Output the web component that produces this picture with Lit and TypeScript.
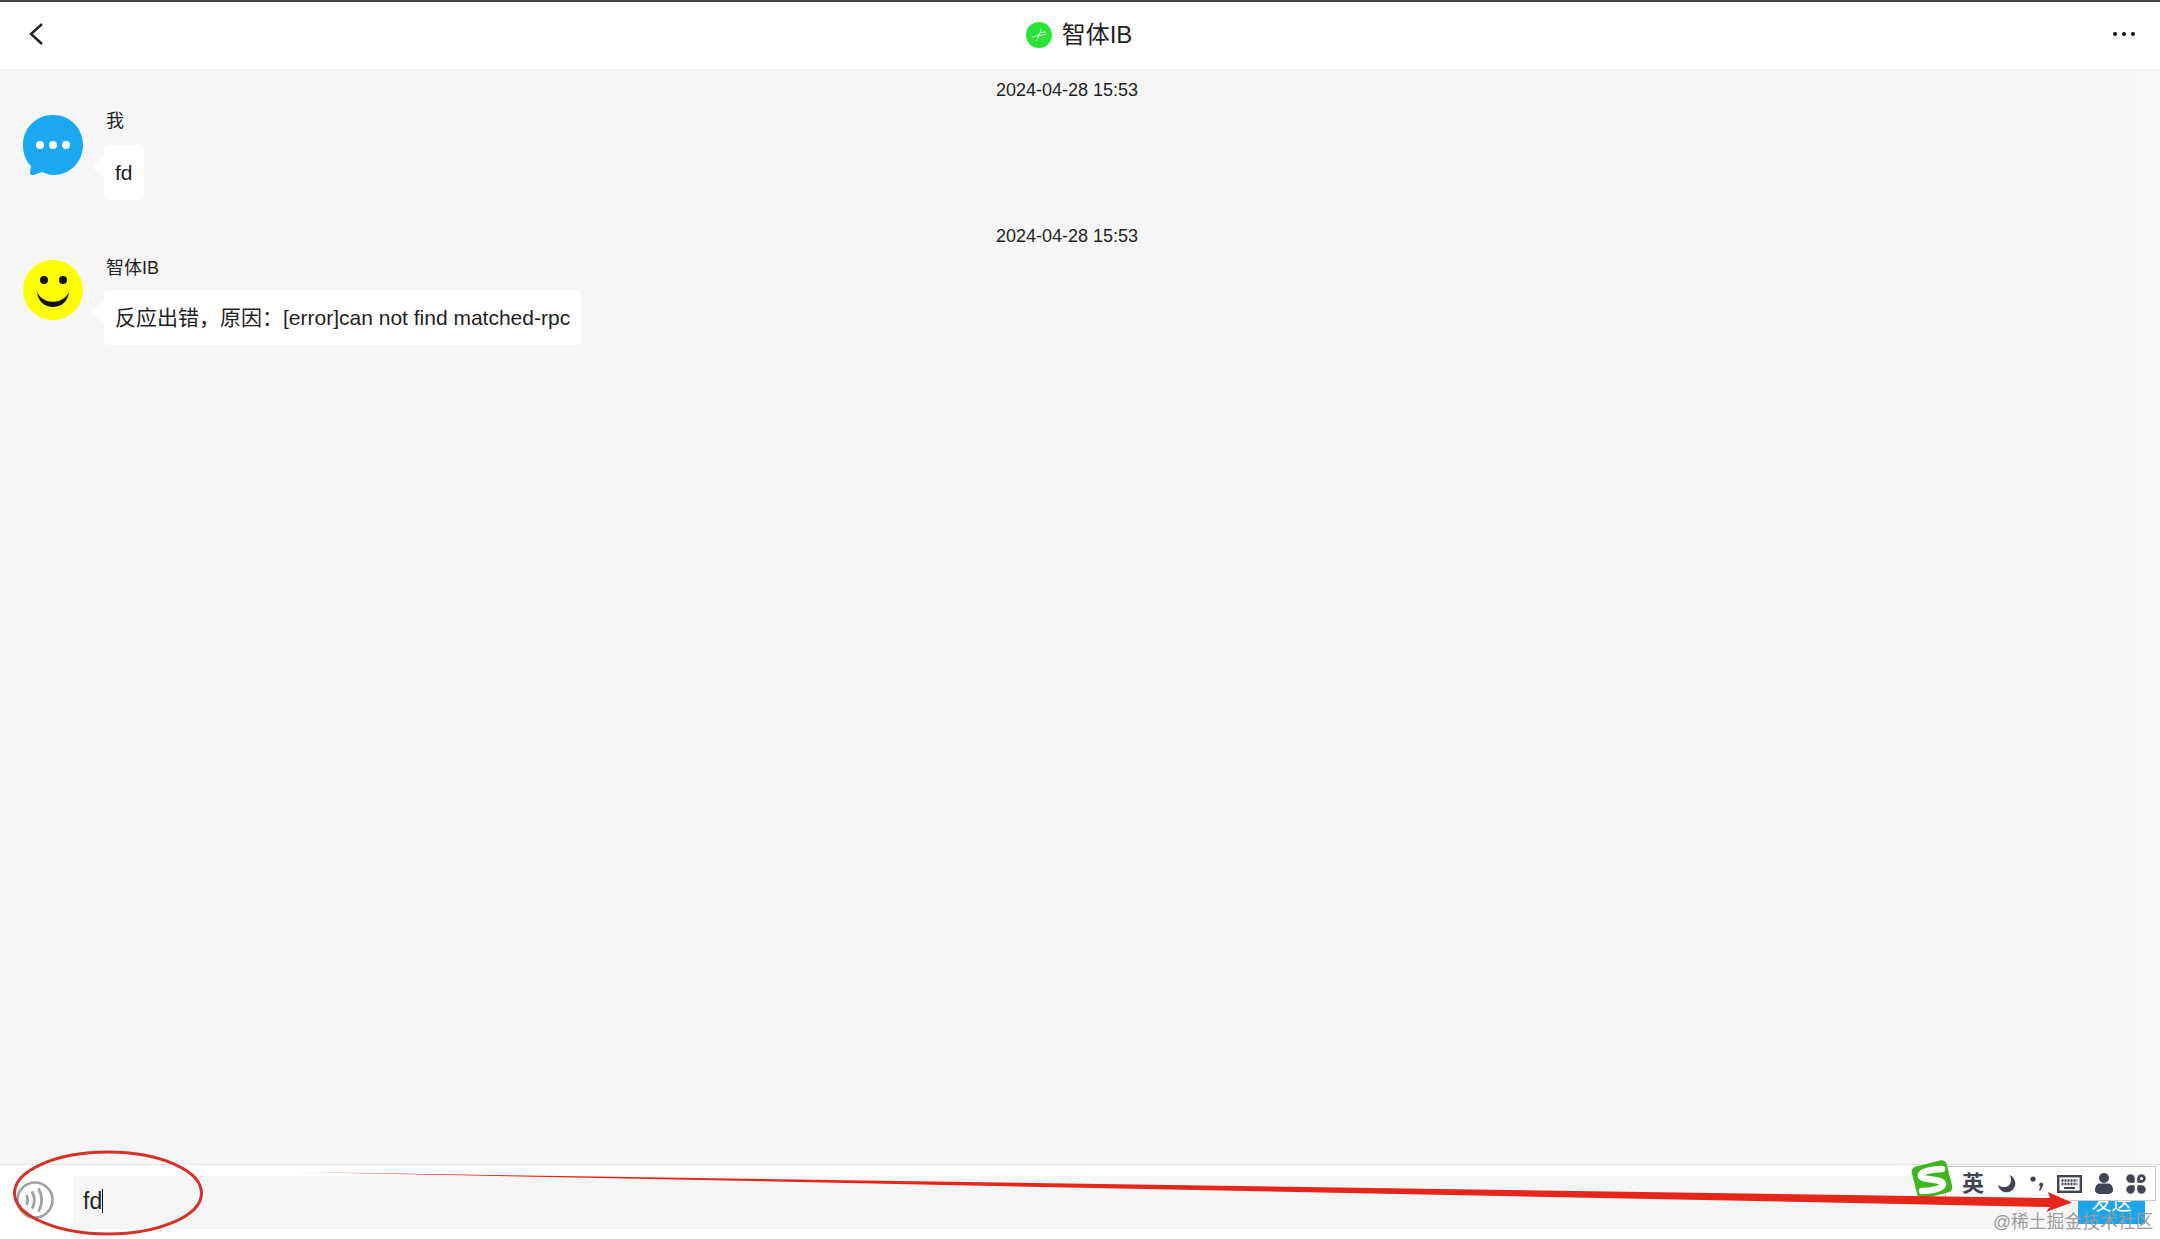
import { LitElement, html, css } from "lit";
import { customElement } from "lit/decorators.js";

const REPLY = "\u53CD\u5E94\u51FA\u9519\uFF0C\u539F\u56E0\uFF1A[error]can not find matched-rpc";

@customElement("app-root")
export class AppRoot extends LitElement {
  static styles = css`
    :host { display: block; height: 1239px; position: relative; overflow: hidden; font-family: "Liberation Sans", "Noto Sans CJK SC", sans-serif; color: #1f1f1f; background: #fff; }
    .page { display: flex; flex-direction: column; height: 100%; border-top: 2px solid #444; box-sizing: border-box; }
    .header { height: 69px; flex: none; box-sizing: border-box; border-bottom: 1px solid #eaeaea; background: #fff; display: flex; align-items: center; justify-content: space-between; padding: 0 24px 4px 28px; }
    .title { display: flex; align-items: center; gap: 10px; font-size: 24px; margin-left: 2px; }
    .title svg { margin-top: 2px; }
    .title span { margin-top: -4px; }
    .body { flex: 1; display: flex; min-height: 0; background: #f6f6f6; }
    .scroll { flex: 1; padding-top: 9px; box-sizing: border-box; }
    .track { width: 26px; flex: none; background: #f7f7f7; }
    .time { text-align: center; font-size: 18px; line-height: 20px; margin-bottom: 14px; }
    .time.first { margin-bottom: 15px; }
    .msg { display: flex; gap: 21px; padding-left: 23px; margin-bottom: 26px; }
    .avatar { width: 60px; height: 60px; flex: none; }
    .who { font-size: 18px; line-height: 20px; margin: -4px 0 14px 2px; }
    .who.low { margin-top: -2px; margin-bottom: 12px; }
    .bubble { position: relative; display: inline-block; background: #fff; border-radius: 5px; font-size: 21px; line-height: 55px; padding: 0 11px; }
    .bubble::before { content: ""; position: absolute; left: -12px; top: 11px; border: 11px solid transparent; border-left: 0; border-right: 12px solid #fff; }
    .footer { height: 75px; flex: none; box-sizing: border-box; border-top: 1px solid #e2e2e2; background: #fff; display: flex; padding: 11px 15px 10px 16px; }
    .voice { width: 38px; height: 38px; flex: none; margin: 5px 20px 0 0; }
    .input { flex: 1; background: #f6f6f6; font-size: 23px; line-height: 50px; padding-left: 9px; }
    .caret { display: inline-block; width: 1px; height: 24px; background: #111; vertical-align: -4px; }
    .send { width: 67px; height: 42px; flex: none; align-self: center; background: #1aa5ec; color: #fff; font-size: 20px; text-align: center; line-height: 42px; }
    .ink { position: absolute; left: 0; top: 0; pointer-events: none; }
    .ime { position: absolute; left: 1945px; top: 1166px; width: 211px; height: 35px; box-sizing: border-box; background: #fff; border: 1px solid #c9c9c9; display: flex; align-items: center; gap: 13px; padding-left: 16px; color: #3f4554; }
    .ime-zh { font-size: 22px; font-weight: 700; line-height: 1; width: 22px; flex: none; }
    .ime svg { flex: none; }
    .logo { position: absolute; left: 1909px; top: 1159px; }
    .mark { position: absolute; left: 1993px; top: 1211px; font-size: 17.8px; line-height: 22px; color: #9b9b9b; white-space: nowrap; }
  `;

  private bubbleIcon() {
    return html`<svg class="avatar" viewBox="0 0 60 60"><path fill="#1aa8f1" d="M30 0C13 0 0 13 0 30c0 9 3 16 8 21l-1 7c0 2 2 2 4 2l8-3c3 1 7 3 11 3 17 0 30-13 30-30S47 0 30 0z"/><circle cx="17" cy="30" r="4" fill="#fff"/><circle cx="30" cy="30" r="4" fill="#fff"/><circle cx="43" cy="30" r="4" fill="#fff"/></svg>`;
  }

  private smile() {
    return html`<svg class="avatar" viewBox="0 0 60 60"><circle cx="30" cy="30" r="30" fill="#ffff00"/><ellipse cx="21" cy="20" rx="4" ry="4" fill="#111"/><ellipse cx="40" cy="20" rx="4" ry="4" fill="#111"/><path d="M14 32c2 20 30 20 32 0-6 13-26 13-32 0z" fill="#111"/></svg>`;
  }

  render() {
    return html`
      <div class="page">
        <div class="header">
          <svg width="16" height="26" viewBox="0 0 16 26"><path d="M14 3 3 13l11 10" fill="none" stroke="#222" stroke-width="2.4"/></svg>
          <div class="title">
            <svg width="26" height="26" viewBox="0 0 26 26"><circle cx="13" cy="13" r="13" fill="#2be338"/><path d="M6 15c4 0 5-2 8-4 2-1 4-1 6-1M15 7c0 5-3 8-5 12M11 14c3 0 6-1 9-2" fill="none" stroke="#d8f5da" stroke-width="1"/></svg>
            <span>智体IB</span>
          </div>
          <svg width="24" height="6" viewBox="0 0 24 6"><circle cx="3" cy="3" r="2" fill="#111"/><circle cx="12" cy="3" r="2" fill="#111"/><circle cx="21" cy="3" r="2" fill="#111"/></svg>
        </div>
        <div class="body">
          <div class="scroll">
            <div class="time first">2024-04-28 15:53</div>
            <div class="msg">
              ${this.bubbleIcon()}
              <div><div class="who">我</div><div class="bubble">fd</div></div>
            </div>
            <div class="time">2024-04-28 15:53</div>
            <div class="msg">
              ${this.smile()}
              <div><div class="who low">智体IB</div><div class="bubble">${REPLY}</div></div>
            </div>
          </div>
          <div class="track"></div>
        </div>
        <div class="footer">
          <svg class="voice" viewBox="0 0 38 38"><circle cx="19" cy="19" r="17.500" fill="none" stroke="#a0a0a0" stroke-width="2.600"/><g fill="none" stroke="#a0a0a0" stroke-width="2.800" stroke-linecap="round"><path d="M11 15c1 3 1 5 0 8"/><path d="M16.500 11.500c2.500 5 2.500 10 0 15"/><path d="M23 8.500c3.500 7 3.500 14 0 21"/></g></svg>
          <div class="input">fd<span class="caret"></span></div>
          <div class="send">发送</div>
        </div>
      </div>

      <div class="mark">@稀土掘金技术社区</div>

      <div class="ime">
        <span class="ime-zh">英</span>
        <svg width="20" height="20" viewBox="0 0 22 22"><path fill="#3f4554" d="M14 1c3 6 1 12-4 13-3 1-6 0-9-2 1 5 6 9 11 8 5-1 9-6 8-11-1-4-3-7-6-8z"/></svg>
        <svg width="14" height="15" viewBox="0 0 14 15"><circle cx="3" cy="3" r="2.600" fill="#3f4554"/><path fill="#3f4554" d="M10 7c2-1 4 0 3 3l-3 5-1-1 1.500-3.500C9 10 8.500 8 10 7z"/></svg>
        <svg width="25" height="18" viewBox="0 0 25 18"><rect x="1.200" y="1.200" width="22.600" height="15.600" fill="#fff" stroke="#3f4554" stroke-width="2.400"/><path stroke="#3f4554" stroke-width="2.400" stroke-dasharray="2 1" d="M4.500 5.500h16M4.500 9h16" fill="none"/><path stroke="#3f4554" stroke-width="2" d="M7 13h11"/></svg>
        <svg width="18" height="21" viewBox="0 0 18 21"><circle cx="9" cy="5" r="5" fill="#3f4554"/><path fill="#3f4554" d="M0 17c0-5 3-6.500 5-6.500h8c2 0 5 1.500 5 6.500 0 3-3 4-5 4H5c-2 0-5-1-5-4z"/></svg>
        <svg width="20" height="20" viewBox="0 0 20 20"><g fill="#3f4554"><circle cx="4.500" cy="4.500" r="4.200"/><rect x="4.500" y="4.500" width="4.200" height="4.200"/><circle cx="15.500" cy="4.500" r="4.200"/><rect x="11.300" y="4.500" width="4.200" height="4.200"/><circle cx="4.500" cy="15.500" r="4.200"/><rect x="4.500" y="11.300" width="4.200" height="4.200"/><circle cx="15.500" cy="15.500" r="4.200"/><rect x="11.300" y="11.300" width="4.200" height="4.200"/></g><circle cx="15.500" cy="4.500" r="1.600" fill="#fff"/></svg>
      </div>

      <svg class="logo" width="46" height="42" viewBox="0 0 46 42">
        <rect x="5" y="4" width="36" height="33" rx="5" fill="#3fb51f" transform="rotate(-14 23 20.500)"/>
        <path fill="none" stroke="#fff" stroke-width="6.500" stroke-linecap="round" d="M33 10C25 10 11 12 12 17c1 5 21 2 22 8 0 5-13 7-21 7"/>
      </svg>

      <svg class="ink" width="2160" height="1239" viewBox="0 0 2160 1239">
        <ellipse cx="108" cy="1193" rx="93.500" ry="41" fill="none" stroke="#d2322a" stroke-width="3"/>
        <path fill="#e6261a" d="M295 1172 2050 1198 2048 1192 2072 1202.500 2046 1212 2050 1207z"/>
      </svg>
    `;
  }
}
